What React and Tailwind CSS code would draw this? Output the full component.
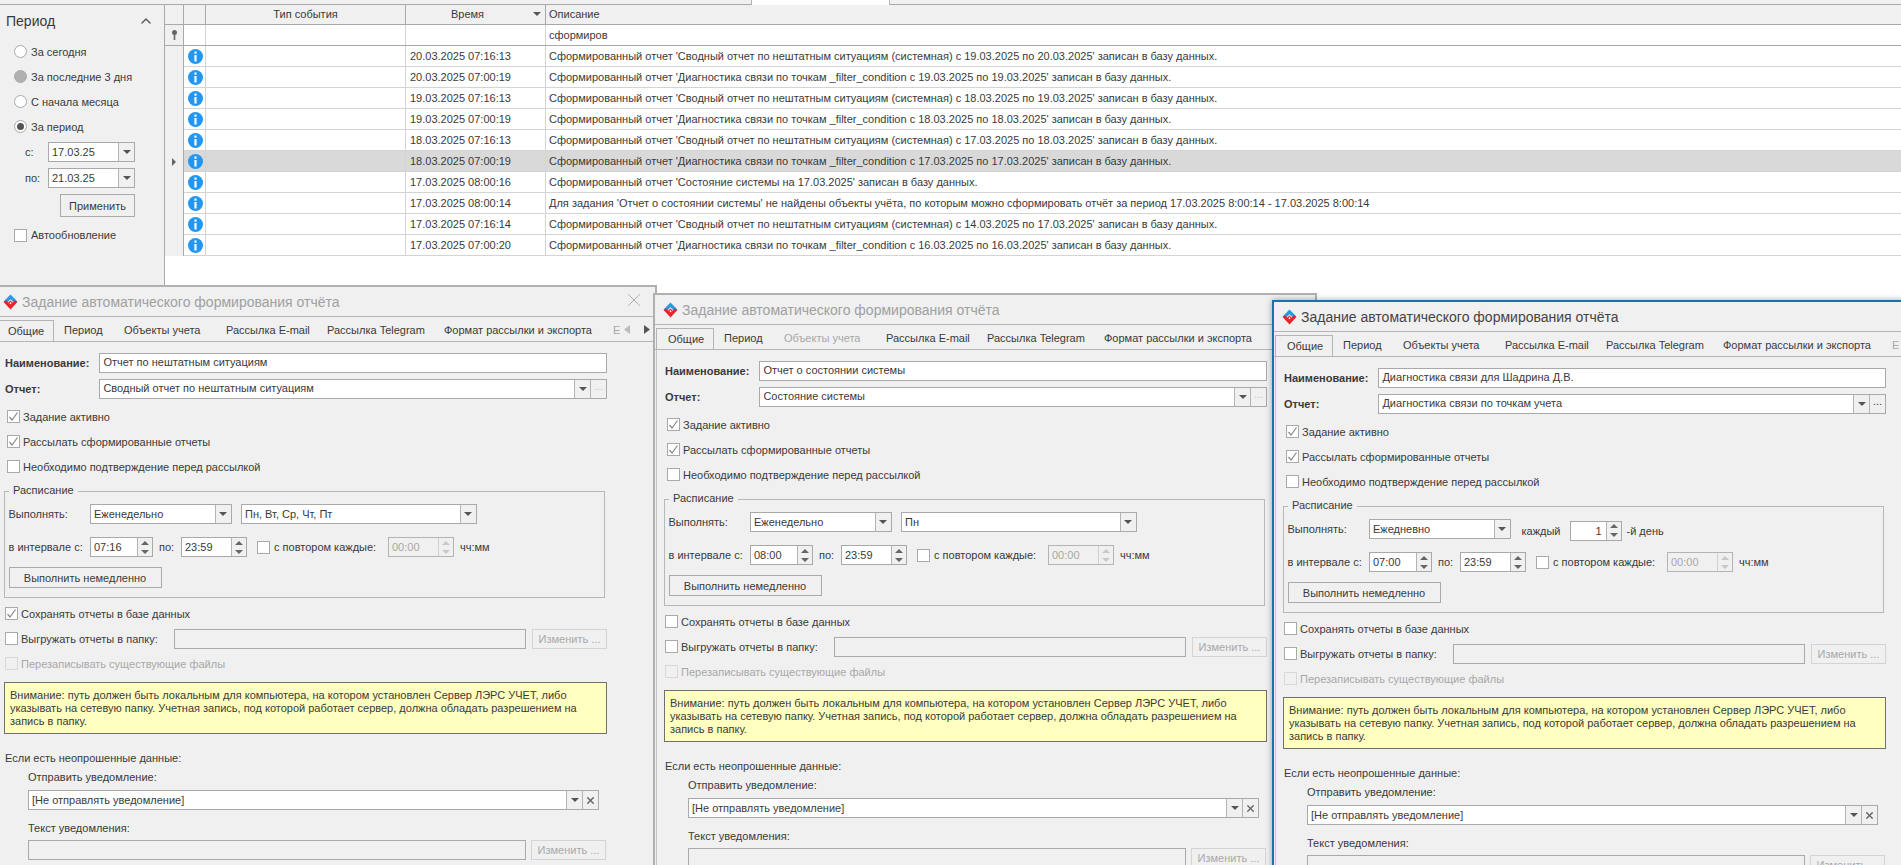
import React from 'react'
import { ChevronUp, X } from 'lucide-react'

const fontCls = "font-['Liberation_Sans',Arial,sans-serif] text-[11px] leading-[14px]"
const summary = (from, to) => `Сформированный отчет 'Сводный отчет по нештатным ситуациям (системная) с ${from} по ${to}' записан в базу данных.`
const diag = (from, to) => `Сформированный отчет 'Диагностика связи по точкам _filter_condition с ${from} по ${to}' записан в базу данных.`

const rows = [
  { time: '20.03.2025 07:16:13', text: summary('19.03.2025', '20.03.2025') },
  { time: '20.03.2025 07:00:19', text: diag('19.03.2025', '19.03.2025') },
  { time: '19.03.2025 07:16:13', text: summary('18.03.2025', '19.03.2025') },
  { time: '19.03.2025 07:00:19', text: diag('18.03.2025', '18.03.2025') },
  { time: '18.03.2025 07:16:13', text: summary('17.03.2025', '18.03.2025') },
  { time: '18.03.2025 07:00:19', text: diag('17.03.2025', '17.03.2025'), selected: true },
  { time: '17.03.2025 08:00:16', text: "Сформированный отчет 'Состояние системы на 17.03.2025' записан в базу данных." },
  { time: '17.03.2025 08:00:14', text: "Для задания 'Отчет о состоянии системы' не найдены объекты учёта, по которым можно сформировать отчёт за период 17.03.2025 8:00:14 - 17.03.2025 8:00:14" },
  { time: '17.03.2025 07:16:14', text: summary('14.03.2025', '17.03.2025') },
  { time: '17.03.2025 07:00:20', text: diag('16.03.2025', '16.03.2025') },
]

const tabs = [
  { label: 'Общие', cls: 'w-[58px] pl-[11px]' },
  { label: 'Период', cls: 'w-[60px] pl-[10px]' },
  { label: 'Объекты учета', cls: 'w-[102px] pl-[10px]' },
  { label: 'Рассылка E-mail', cls: 'w-[101px] pl-[10px]' },
  { label: 'Рассылка Telegram', cls: 'w-[117px] pl-[10px]' },
  { label: 'Формат рассылки и экспорта', cls: 'w-[169px] pl-[10px]' },
  { label: 'Е', cls: 'w-[17px] pl-[10px] text-[#a8a8a8]' },
]

const Tri = ({ cls = 'border-t-[#555]' }) => (
  <span className={`w-0 h-0 border-x-[4px] border-x-transparent border-t-[4px] ${cls}`} />
)

const DropBtn = () => (
  <span className="w-[16px] h-full flex items-center justify-center bg-[#f0f0f0] border-l border-[#b4b4b4]">
    <Tri />
  </span>
)

const Check = ({ checked, disabled }) => (
  <span className={`w-[13px] h-[13px] shrink-0 border flex items-center justify-center ${disabled ? 'bg-[#f0f0f0] border-[#d8d8d8]' : 'bg-white border-[#a9a9a9]'}`}>
    {checked && (
      <svg width="11" height="11" viewBox="0 0 11 11" fill="none">
        <path d="M1.5 6 L4 9 L9.5 1.5" stroke="#8a8a8a" strokeWidth="1.2" />
      </svg>
    )}
  </span>
)

const CheckRow = ({ checked, disabled, label, cls = '' }) => (
  <div className={`h-[25px] flex items-center ${cls}`}>
    <Check checked={checked} disabled={disabled} />
    <span className={`ml-[3px] ${disabled ? 'text-[#a8a8a8]' : ''}`}>{label}</span>
  </div>
)

const Spin = ({ value, cls, disabled, right }) => (
  <div className={`h-[20px] flex border ${disabled ? 'bg-[#f0f0f0] border-[#b4b4b4] text-[#a8a8a8]' : 'bg-white border-[#a9a9a9]'} ${cls}`}>
    <span className={`flex-1 px-[3px] leading-[18px] ${right ? 'text-right pr-[4px]' : ''}`}>{value}</span>
    <span className={`w-[15px] flex flex-col bg-[#f0f0f0] border-l ${disabled ? 'border-[#d0d0d0]' : 'border-[#b4b4b4]'}`}>
      <span className="h-1/2 flex items-center justify-center">
        <Tri cls={`rotate-180 ${disabled ? 'border-t-[#c8c8c8]' : 'border-t-[#666]'}`} />
      </span>
      <span className="h-1/2 flex items-center justify-center">
        <Tri cls={disabled ? 'border-t-[#c8c8c8]' : 'border-t-[#666]'} />
      </span>
    </span>
  </div>
)

const Logo = () => (
  <svg width="15" height="16" viewBox="0 0 14 15" className="shrink-0">
    <path d="M7 0.5 L13.5 7 L11 9 L7 5 L3 9 L0.5 7 Z" fill="#2a9ae0" />
    <path d="M0.5 7.5 L7 14.5 L13.5 7.5 L11 6.2 L7 10.5 L3 6.2 Z" fill="#e8232c" />
    <path d="M7 6 L9.5 8.5 L7 11 L4.5 8.5 Z" fill="#e8232c" />
    <path d="M7 7.6 L8 8.6 L7 9.6 L6 8.6 Z" fill="#fff" />
  </svg>
)

const ChangeBtn = ({ cls }) => (
  <span className={`h-[20px] flex items-center justify-center border border-[#d4d4d4] text-[#a8a8a8] ${cls}`}>
    Изменить ...
  </span>
)

const Win = ({ cls, titleCls, name, report, days, daily, from, saved, objectsOff, moreOn }) => (
  <div className={`absolute w-[664px] h-[600px] border-2 bg-[#f0f0f0] ${cls}`}>
    <div className="h-[30px] pl-[8px] pt-[1px] flex items-center gap-[4px] border-b border-[#b4b4b4]">
      <Logo />
      <span className={`text-[14px] ${titleCls}`}>Задание автоматического формирования отчёта</span>
    </div>
    <X className="absolute top-[2px] left-[628px] text-[#a8a8a8]" size={22} strokeWidth={1} />

    <div className="h-[25px] pt-[3px] pl-[1px] flex overflow-hidden whitespace-nowrap border-b border-[#b4b4b4]">
      {tabs.map((t, i) => (
        <div
          key={t.label}
          className={`shrink-0 h-[22px] leading-[20px] overflow-hidden ${t.cls} ${i === 0 ? 'bg-[#f0f0f0] border-x border-t border-[#b4b4b4] relative z-10' : ''} ${objectsOff && i === 2 ? 'text-[#a8a8a8]' : ''}`}
        >
          {t.label}
        </div>
      ))}
    </div>
    <svg width="6" height="9" viewBox="0 0 6 9" className="absolute left-[629px] top-[38px]">
      <path d="M6 0 L0 4.5 L6 9 Z" fill="#bbbbbb" />
    </svg>
    <svg width="6" height="9" viewBox="0 0 6 9" className="absolute left-[649px] top-[38px]">
      <path d="M0 0 L6 4.5 L0 9 Z" fill="#555555" />
    </svg>

    <div className="ml-[1px] border-l border-[#c4c4c4] h-full">
      <div className="ml-[7px] w-[603px] pt-[11px] flex flex-col">
        <div className="flex items-center h-[20px] pl-[1px]">
          <span className="w-[94.5px] font-bold">Наименование:</span>
          <span className="w-[508px] h-full bg-white border border-[#a9a9a9] px-[3px] leading-[17px]">{name}</span>
        </div>
        <div className="flex items-center h-[20px] mt-[6px] pl-[1px]">
          <span className="w-[94.5px] font-bold">Отчет:</span>
          <div className="w-[508px] h-full bg-white border border-[#a9a9a9] flex">
            <span className="flex-1 px-[3px] leading-[17px]">{report}</span>
            <DropBtn />
            <span className={`w-[16px] h-full flex items-center justify-center bg-[#f0f0f0] border-l border-[#b4b4b4] leading-none pb-[5px] ${moreOn ? 'text-[#444]' : 'text-[#c4c4c4]'}`}>...</span>
          </div>
        </div>
        <div className="mt-[5px] pl-[3px]">
          <CheckRow checked label="Задание активно" />
          <CheckRow checked label="Рассылать сформированные отчеты" />
          <CheckRow label="Необходимо подтверждение перед рассылкой" />
        </div>

        <div className="relative mt-[12px] w-[601px] h-[107px] border border-[#b8b8b8] pt-[12px] pl-[3.5px]">
          <span className="absolute -top-[9px] left-[4px] px-[4px] bg-[#f0f0f0]">Расписание</span>
          <div className="flex items-center h-[20px]">
            <span className="w-[81.5px]">Выполнять:</span>
            <div className="w-[141.5px] h-full bg-white border border-[#a9a9a9] flex">
              <span className="flex-1 px-[3px] leading-[18px]">{daily ? 'Ежедневно' : 'Еженедельно'}</span>
              <DropBtn />
            </div>
            {daily ? (
              <div className="flex items-center">
                <span className="ml-[11px] w-[48px] pt-[4px]">каждый</span>
                <Spin value="1" right cls="w-[52px] mt-[3px]" />
                <span className="ml-[5px] pt-[4px]">-й день</span>
              </div>
            ) : (
              <div className="ml-[9.5px] w-[235.5px] h-[20px] bg-white border border-[#a9a9a9] flex">
                <span className="flex-1 px-[3px] leading-[18px]">{days}</span>
                <DropBtn />
              </div>
            )}
          </div>
          <div className="flex items-center h-[20px] mt-[13px]">
            <span className="w-[81.5px]">в интервале с:</span>
            <Spin value={from} cls="w-[63px]" />
            <span className="w-[28px] pl-[6px]">по:</span>
            <Spin value="23:59" cls="w-[66px]" />
            <span className="ml-[10px]"><Check /></span>
            <span className="w-[118px] pl-[4px] whitespace-nowrap">с повтором каждые:</span>
            <Spin value="00:00" disabled cls="w-[66px]" />
            <span className="ml-[6px]">чч:мм</span>
          </div>
          <div className="w-[153px] h-[21px] mt-[10px] border border-[#a9a9a9] flex items-center justify-center">Выполнить немедленно</div>
        </div>

        <div className="mt-[3px] pl-[1px]">
          <CheckRow checked={saved} label="Сохранять отчеты в базе данных" />
          <div className="h-[25px] flex items-center">
            <Check />
            <span className="ml-[3px] w-[153px]">Выгружать отчеты в папку:</span>
            <span className="w-[352px] h-[20px] border border-[#a9a9a9]" />
            <ChangeBtn cls="ml-[6px] w-[75px]" />
          </div>
          <CheckRow disabled label="Перезаписывать существующие файлы" />
        </div>

        <div className="mt-[6px] h-[52px] bg-[#ffffc0] border border-[#707070] px-[5px] pt-[6px] leading-[13px]">
          Внимание: путь должен быть локальным для компьютера, на котором установлен Сервер ЛЭРС УЧЕТ, либо указывать на сетевую папку. Учетная запись, под которой работает сервер, должна обладать разрешением на запись в папку.
        </div>

        <div className="mt-[17px] pl-[1px]">Если есть неопрошенные данные:</div>
        <div className="mt-[5px] pl-[24px]">Отправить уведомление:</div>
        <div className="ml-[24px] mt-[6px] w-[571px] h-[20px] bg-white border border-[#a9a9a9] flex">
          <span className="flex-1 px-[3px] leading-[18px]">[Не отправлять уведомление]</span>
          <DropBtn />
          <span className="w-[16px] h-full flex items-center justify-center bg-[#f0f0f0] border-l border-[#b4b4b4]">
            <X size={11} strokeWidth={3} className="text-[#666]" />
          </span>
        </div>
        <div className="mt-[11px] pl-[24px]">Текст уведомления:</div>
        <div className="mt-[5px] ml-[24px] flex">
          <span className="w-[498px] h-[20px] border border-[#a9a9a9]" />
          <ChangeBtn cls="ml-[5px] w-[75px]" />
        </div>
      </div>
    </div>
  </div>
)

const Radio = ({ label, state }) => (
  <div className="h-[25px] flex items-center pl-[14px]">
    <span className={`w-[13px] h-[13px] rounded-full border border-[#a9a9a9] flex items-center justify-center ${state === 'hover' ? 'bg-[#b0b0b0] border-[#888]' : 'bg-white'}`}>
      {state === 'on' && <span className="w-[7px] h-[7px] rounded-full bg-[#555]" />}
    </span>
    <span className="ml-[4px]">{label}</span>
  </div>
)

const DateBox = ({ label, value, cls }) => (
  <div className={`flex items-center h-[20px] pl-[25px] ${cls}`}>
    <span className="w-[23px]">{label}</span>
    <div className="w-[87px] h-full bg-white border border-[#a9a9a9] flex">
      <span className="flex-1 px-[3px] leading-[18px]">{value}</span>
      <DropBtn />
    </div>
  </div>
)

const InfoIcon = () => (
  <span className="mx-auto w-[15px] h-[15px] rounded-full bg-[#2196f3] flex items-center justify-center">
    <svg width="5" height="11" viewBox="0 0 5 11" fill="#fff">
      <rect x="1.4" y="0.5" width="2.2" height="2.2" />
      <rect x="1.4" y="4" width="2.2" height="6.5" />
    </svg>
  </span>
)

const gridCols = 'grid grid-cols-[19px_22px_200px_140px_1fr]'

const App = () => (
  <div className={`relative w-[1901px] h-[865px] overflow-hidden bg-white text-[#3a3a3a] ${fontCls}`}>
    <div className="relative h-[5px] bg-[#f0f0f0] border-b border-[#a9a9a9]">
      <span className="absolute left-[751px] top-0 w-[139px] h-[5px] bg-white border-x border-[#b4b4b4]" />
    </div>
    <div className="flex h-[280px]">
      <aside className="w-[165px] shrink-0 bg-[#f0f0f0] border-r border-[#a9a9a9]">
        <div className="h-[32px] mb-[2px] pl-[6px] pr-[10px] flex items-center justify-between text-[14px]">
          Период
          <ChevronUp size={16} strokeWidth={2} className="text-[#555]" />
        </div>
        <Radio label="За сегодня" />
        <Radio label="За последние 3 дня" state="hover" />
        <Radio label="С начала месяца" />
        <Radio label="За период" state="on" />
        <DateBox label="с:" value="17.03.25" cls="mt-[3px]" />
        <DateBox label="по:" value="21.03.25" cls="mt-[6px]" />
        <div className="ml-[60px] mt-[6px] w-[75px] h-[23px] border border-[#a9a9a9] flex items-center justify-center">Применить</div>
        <div className="mt-[11px] pl-[14px] flex items-center">
          <Check />
          <span className="ml-[4px]">Автообновление</span>
        </div>
      </aside>

      <main className="flex-1 min-w-0">
        <div className={`${gridCols} h-[20px] bg-[#f0f0f0] border-b border-[#a9a9a9] leading-[18px]`}>
          <span className="border-r border-[#a9a9a9]" />
          <span className="border-r border-[#a9a9a9]" />
          <span className="border-r border-[#a9a9a9] text-center">Тип события</span>
          <span className="border-r border-[#a9a9a9] relative text-center pr-[16px]">
            Время
            <span className="absolute right-[4px] top-[7px] flex"><Tri /></span>
          </span>
          <span className="pl-[3px]">Описание</span>
        </div>
        <div className={`${gridCols} h-[21px] border-b border-[#a9a9a9] leading-[20px]`}>
          <span className="bg-[#f0f0f0] border-r border-[#a9a9a9] flex items-center justify-center">
            <svg width="7" height="10" viewBox="0 0 7 10" fill="#666">
              <circle cx="3.5" cy="2.5" r="2.5" />
              <rect x="2.7" y="4" width="1.6" height="6" />
            </svg>
          </span>
          <span className="border-r border-[#d4d4d4]" />
          <span className="border-r border-[#d4d4d4]" />
          <span className="border-r border-[#d4d4d4]" />
          <span className="pl-[3px]">сформиров</span>
        </div>
        {rows.map((r) => (
          <div key={r.time} className={`${gridCols} h-[21px] leading-[20px]`}>
            <span className="bg-[#f0f0f0] border-r border-[#a9a9a9] flex items-center justify-center">
              {r.selected && <span className="w-0 h-0 border-y-[4px] border-y-transparent border-l-[4px] border-l-[#666]" />}
            </span>
            <span className={`flex items-center pl-[2px] border-r border-b border-[#d4d4d4] ${r.selected ? 'bg-[#d9d9d9]' : ''}`}><InfoIcon /></span>
            <span className={`border-r border-b border-[#d4d4d4] ${r.selected ? 'bg-[#d9d9d9]' : ''}`} />
            <span className={`pl-[4px] border-r border-b border-[#d4d4d4] ${r.selected ? 'bg-[#d9d9d9]' : ''}`}>{r.time}</span>
            <span className={`pl-[3px] border-b border-[#d4d4d4] whitespace-nowrap overflow-hidden ${r.selected ? 'bg-[#d9d9d9]' : ''}`}>{r.text}</span>
          </div>
        ))}
      </main>
    </div>

    <Win
      cls="left-[-7px] top-[285px] border-[#b0b0b0] z-10"
      titleCls="text-[#a0a0a0]"
      name="Отчет по нештатным ситуациям"
      report="Сводный отчет по нештатным ситуациям"
      days="Пн, Вт, Ср, Чт, Пт"
      from="07:16"
      saved
    />
    <Win
      cls="left-[653px] top-[293px] border-[#b0b0b0] z-20"
      titleCls="text-[#a0a0a0]"
      name="Отчет о состоянии системы"
      report="Состояние системы"
      days="Пн"
      from="08:00"
      objectsOff
    />
    <Win
      cls="left-[1272px] top-[300px] border-[#1273b7] z-30 shadow-[0_0_6px_rgba(0,0,0,0.35)]"
      titleCls="text-[#444]"
      name="Диагностика связи для Шадрина Д.В."
      report="Диагностика связи по точкам учета"
      from="07:00"
      daily
      moreOn
    />
  </div>
)

export default App
